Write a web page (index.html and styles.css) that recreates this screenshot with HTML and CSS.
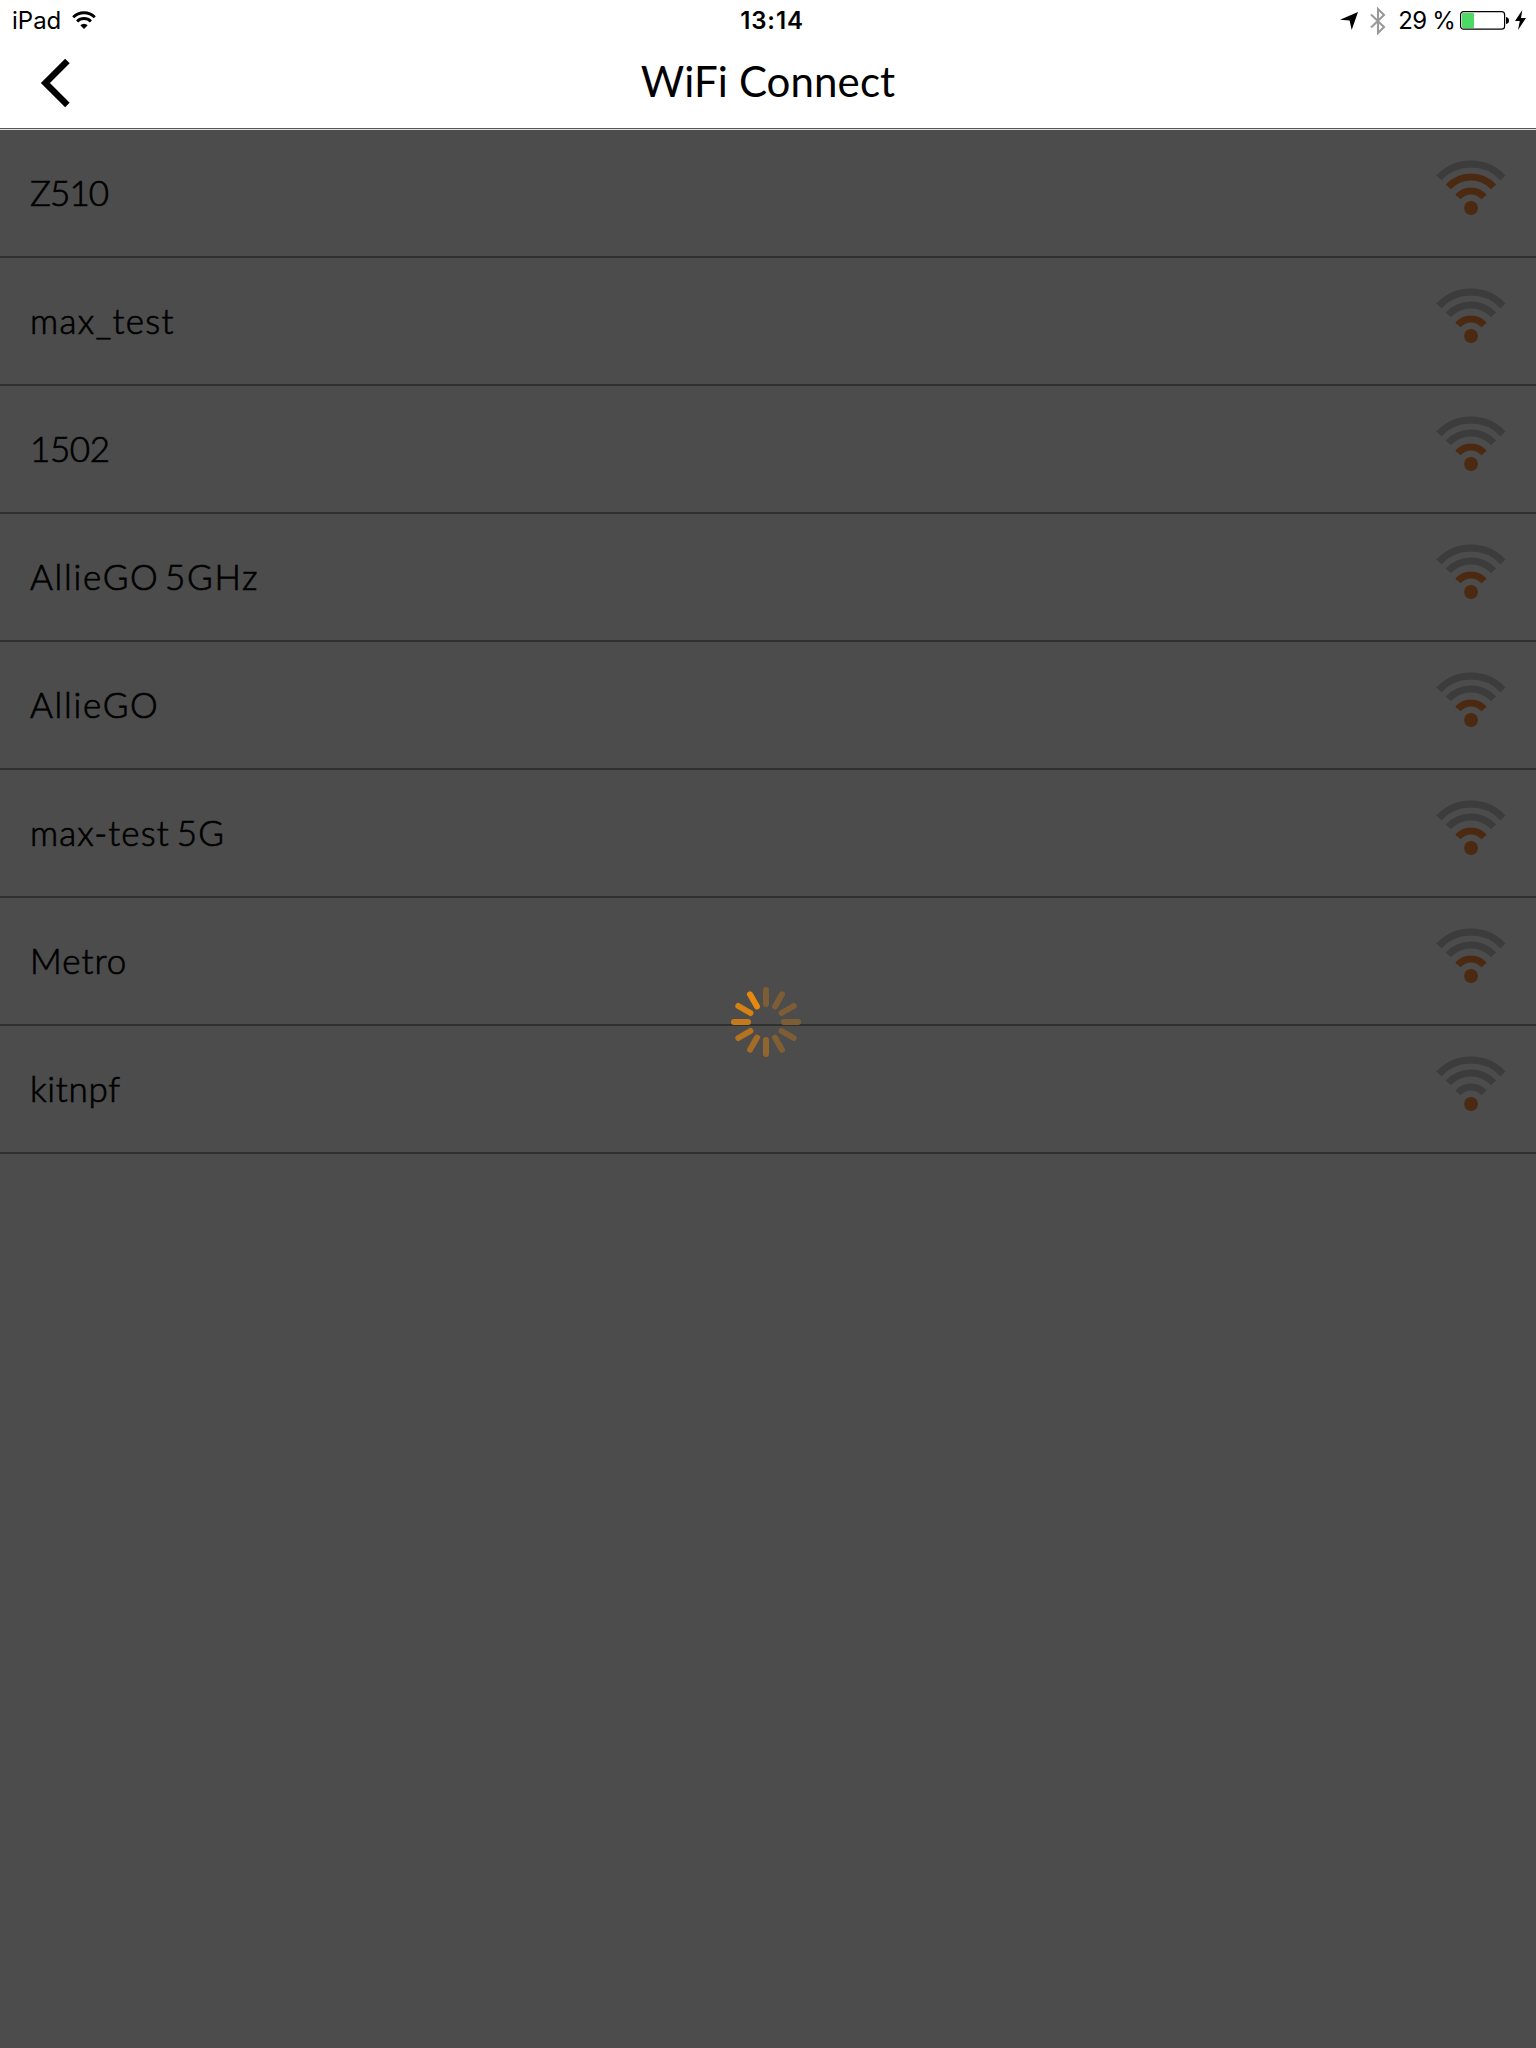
FILE: index.html
```html
<!DOCTYPE html>
<html lang="en">
<head>
<meta charset="utf-8">
<title>WiFi Connect</title>
<link rel="stylesheet" href="styles.css">
</head>
<body>
<svg class="defs" width="0" height="0">
  <symbol id="signal" viewBox="0 0 70 50">
    <path class="arc arc3" d="M3 19.8A44 44 0 0 1 67 19.8"/>
    <path class="arc arc2" d="M12.4 28.9A30.8 30.8 0 0 1 57.6 28.9"/>
    <path class="arc arc1" d="M22 39A17.2 17.2 0 0 1 48 39"/>
    <circle class="dot" cx="35" cy="50" r="6.9"/>
  </symbol>
</svg>
<header class="header">
  <div class="status">
    <div class="status-left"><span class="device">iPad</span>
      <svg class="status-wifi" width="26" height="20" viewBox="0 0 26 20"><g fill="none" stroke="#000" stroke-width="2.9"><path d="M2.2 7.2A15.3 15.3 0 0 1 23.8 7.2"/><path d="M6.1 11.4A9.7 9.7 0 0 1 19.9 11.4"/></g><path d="M13 19 9.3 15.3A5.3 5.3 0 0 1 16.7 15.3Z"/></svg>
    </div>
    <span class="clock">13:14</span>
    <div class="status-right">
      <svg class="location" width="18" height="18" viewBox="0 0 18 18"><path d="M0 7.7 18 0 11.7 18 9.6 8.5Z"/></svg>
      <svg class="bluetooth" width="16" height="28" viewBox="0 0 16 28"><path d="M1 7.6 14 20 8 26V2L14 8 1 20.4" fill="none" stroke="#999" stroke-width="2.1"/></svg>
      <span class="percent">29 %</span>
      <svg class="battery" width="49" height="19" viewBox="0 0 49 19"><rect x=".6" y=".6" width="44" height="17.6" rx="3" fill="none" stroke="#000" stroke-width="1.2"/><rect x="2" y="2" width="12" height="15" rx="1" fill="#4cd964"/><path d="M46 6q3 .5 3 3.5T46 13Z"/></svg>
      <svg class="bolt" width="11" height="20" viewBox="0 0 11 20"><path d="M7.3 0 0 11H4.8L3 20 11 8H6Z"/></svg>
    </div>
  </div>
  <div class="nav">
    <svg class="back" width="30" height="50" viewBox="0 0 30 50"><path d="M27.4 3 5.4 25 27.4 47" fill="none" stroke="#000" stroke-width="6.4"/></svg>
    <h1 class="title">WiFi Connect</h1>
  </div>
</header>
<main class="list">
  <div class="row level-2"><span class="name digits-tight">Z510</span><svg class="signal"><use href="#signal"/></svg></div>
  <div class="row level-1"><span class="name loose">max_test</span><svg class="signal"><use href="#signal"/></svg></div>
  <div class="row level-1"><span class="name digits">1502</span><svg class="signal"><use href="#signal"/></svg></div>
  <div class="row level-1"><span class="name wide">AllieGO 5GHz</span><svg class="signal"><use href="#signal"/></svg></div>
  <div class="row level-1"><span class="name wide">AllieGO</span><svg class="signal"><use href="#signal"/></svg></div>
  <div class="row level-1"><span class="name mixed">max-test 5G</span><svg class="signal"><use href="#signal"/></svg></div>
  <div class="row level-1"><span class="name">Metro</span><svg class="signal"><use href="#signal"/></svg></div>
  <div class="row"><span class="name snug">kitnpf</span><svg class="signal"><use href="#signal"/></svg></div>
</main>
<svg class="spinner" width="72" height="72" viewBox="-36 -36 72 72">
  <g stroke-width="6" stroke-linecap="round">
    <path d="M0-18V-32" stroke="#7d5d35"/>
    <path d="M0-18V-32" stroke="#7d5d35" transform="rotate(30)"/>
    <path d="M0-18V-32" stroke="#7d5d35" transform="rotate(60)"/>
    <path d="M0-18V-32" stroke="#7d5d35" transform="rotate(90)"/>
    <path d="M0-18V-32" stroke="#7d5d35" transform="rotate(120)"/>
    <path d="M0-18V-32" stroke="#805f34" transform="rotate(150)"/>
    <path d="M0-18V-32" stroke="#91652d" transform="rotate(180)"/>
    <path d="M0-18V-32" stroke="#a26c27" transform="rotate(210)"/>
    <path d="M0-18V-32" stroke="#b37320" transform="rotate(240)"/>
    <path d="M0-18V-32" stroke="#c47a1a" transform="rotate(270)"/>
    <path d="M0-18V-32" stroke="#d58114" transform="rotate(300)"/>
    <path d="M0-18V-32" stroke="#e6880d" transform="rotate(330)"/>
  </g>
</svg>
</body>
</html>
```
FILE: styles.css
```css
* { box-sizing: border-box; }
body { margin: 0; min-height: 2048px; background: #4c4c4c; color: #000; font-family: Lato, "Open Sans", sans-serif; position: relative; }
svg { display: block; flex: none; }
.defs { position: absolute; }
.header { height: 130px; background: #fff; border-bottom: 1px solid #e0e0e0; }
.status { height: 40px; display: grid; grid-template-columns: 1fr auto 1fr; font: 400 24px/42px Inter, sans-serif; }
.status-left, .status-right { display: flex; align-items: flex-start; }
.status-left { padding-left: 12px; }
.status-wifi { margin: 10px 0 0 10px; }
.clock { font-weight: 600; letter-spacing: 0.9px; padding-left: 8px; }
.status-right { justify-content: flex-end; padding-right: 10px; }
.location { margin: 12px 12px 0 0; }
.bluetooth { margin: 7px 12px 0 0; }
.percent { letter-spacing: -0.8px; }
.battery { margin: 11px 6px 0 5px; }
.bolt { margin-top: 10px; }
.nav { height: 89px; border-bottom: 1px solid #555; display: flex; align-items: center; padding: 0 40px; }
.back { margin-top: -3px; }
.title { flex: 1; margin: -7px 30px 0 0; text-align: center; font-weight: 400; font-size: 42px; line-height: 50px; letter-spacing: 0.1px; }
.row { height: 128px; padding: 0 30px; display: flex; align-items: center; justify-content: space-between; border-bottom: 2px solid #303030; }
.name { font-size: 35px; font-weight: 300; line-height: 44px; margin-top: -2px; letter-spacing: 1px; -webkit-text-stroke: 0.7px #000; }
.digits { letter-spacing: -0.4px; }
.digits-tight { letter-spacing: -0.9px; }
.loose { letter-spacing: 1.3px; }
.wide { letter-spacing: 1.7px; word-spacing: -5.7px; }
.mixed { letter-spacing: 1.1px; word-spacing: -3.5px; }
.snug { letter-spacing: 0.7px; }
.signal { width: 70px; height: 50px; overflow: visible; margin: -21px 0 0 0; }
#signal { overflow: visible; }
.arc { fill: none; stroke-width: 7; stroke: #3c3c3c; }
.arc1 { stroke: var(--arc1, #3c3c3c); }
.arc2 { stroke: var(--arc2, #3c3c3c); }
.dot { fill: #4c2a11; }
.level-1 { --arc1: #4c2a11; }
.level-2 { --arc1: #4c2a11; --arc2: #4c2a11; }
.spinner { position: absolute; left: 730px; top: 986px; }
```
